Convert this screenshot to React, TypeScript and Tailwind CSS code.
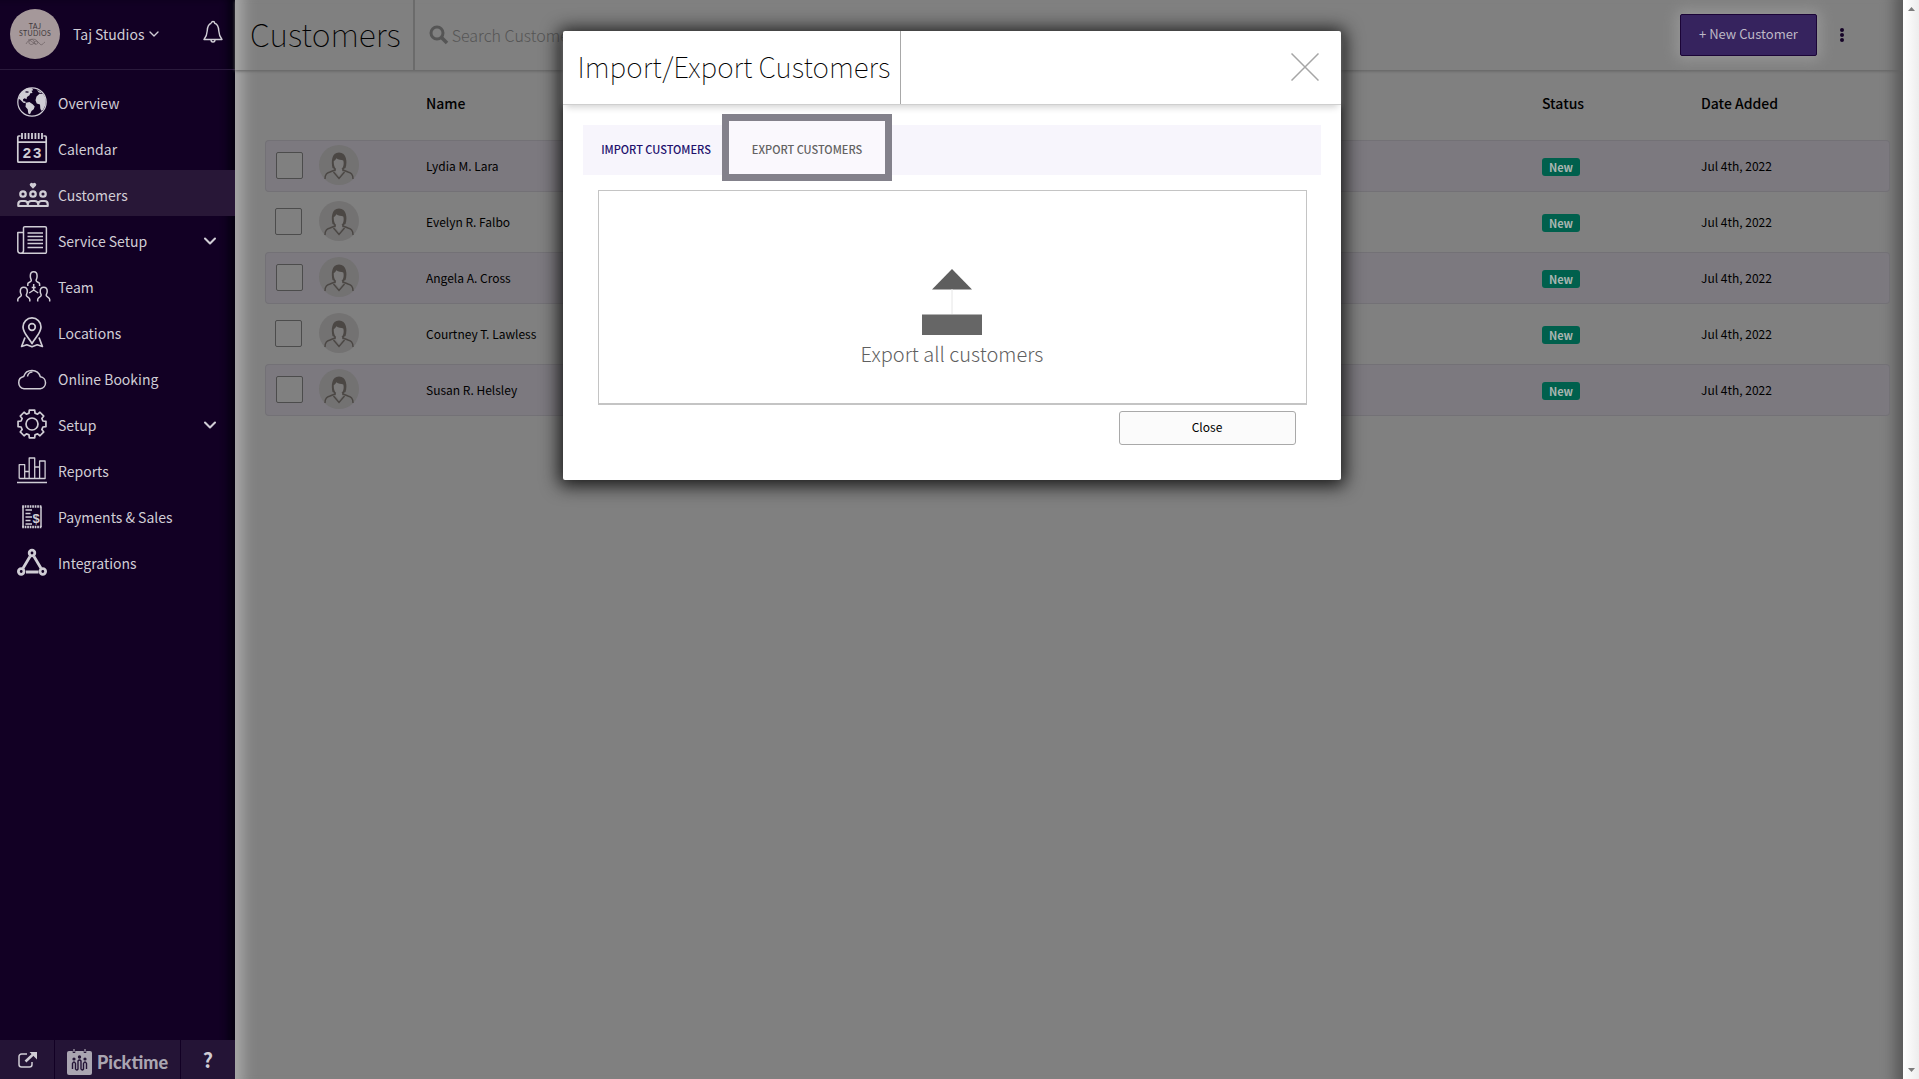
import React from 'react'
import { ChevronDown } from 'lucide-react'

interface NavItem {
  label: string
  icon: React.ReactNode
  active?: boolean
  expandable?: boolean
}

const customers = [
  { name: 'Lydia M. Lara', status: 'New', added: 'Jul 4th, 2022' },
  { name: 'Evelyn R. Falbo', status: 'New', added: 'Jul 4th, 2022' },
  { name: 'Angela A. Cross', status: 'New', added: 'Jul 4th, 2022' },
  { name: 'Courtney T. Lawless', status: 'New', added: 'Jul 4th, 2022' },
  { name: 'Susan R. Helsley', status: 'New', added: 'Jul 4th, 2022' }
]

// eight-toothed outline, centred on 15,17
const gearPoints = Array.from({ length: 8 }, (_, i) => {
  const base = (i * Math.PI) / 4
  return [
    [11.3, -0.27],
    [14.2, -0.19],
    [14.2, 0.19],
    [11.3, 0.27]
  ]
    .map(([r, a]) => `${(15 + r * Math.sin(base + a)).toFixed(2)},${(17 - r * Math.cos(base + a)).toFixed(2)}`)
    .join(' ')
}).join(' ')

function NavIcon({ children }: { children: React.ReactNode }) {
  return (
    <svg
      viewBox="0 -1 34 34"
      className="h-[34px] w-[34px] shrink-0 overflow-visible"
      fill="none"
      stroke="currentColor"
      strokeWidth="1.5"
      strokeLinejoin="round"
      aria-hidden="true"
    >
      {children}
    </svg>
  )
}

const navItems: NavItem[] = [
  {
    label: 'Overview',
    icon: (
      <NavIcon>
        <circle cx="15" cy="17" r="14.2" strokeWidth="1.2" />
        <g fill="currentColor" stroke="none">
          <path d="M3 9.500C5 6.500 8 4 11.500 3l3.500.2 1.200 2-1.700.6 1 2.200-2.200.3-.8 1.900-2.500 1.700-.5 2.300-1.800-1-1.700 1 .3 2 2 .3.500 1.800-2.500-.5-3-3.100-1.600-1z" />
          <path d="M9 17.800l3.400-.8 3.300 2.200 2 2.200-1 2.800-2.200 1.700-1.500 3.300-1.700-.7-.6-4.200-2.200-2.500z" />
          <path d="M19.500 11.500l3-2.800 3.500.4 2 3 .8 4-.3 4-2.400 4.700-1.800 1-1-2.400-.3-4-3.300-.9-1.200-3.200z" />
          <path d="M20 5l3.500 1.700 1.500 1.500-3.200-.6z" />
        </g>
        <path d="M8.500 6.800l3 .4" stroke="#120024" strokeWidth="1.200" />
      </NavIcon>
    )
  },
  {
    label: 'Calendar',
    icon: (
      <NavIcon>
        <path d="M3.500 5H1.800a1 1 0 0 0-1 1v24.200a1 1 0 0 0 1 1h26.400a1 1 0 0 0 1-1V6a1 1 0 0 0-1-1h-1.700M1 11.200h28" strokeWidth="1.700" />
        <path d="M5 2v6M8.300 2v6M11.600 2v6M15 2v6M18.400 2v6M21.700 2v6M25 2v6" strokeWidth="1.800" />
        <text x="5.800 16" y="27" fontSize="15" fontWeight="700" fontFamily="Liberation Sans, sans-serif" fill="currentColor" stroke="none">
          23
        </text>
      </NavIcon>
    )
  },
  {
    label: 'Customers',
    active: true,
    icon: (
      <NavIcon>
        <path d="M16 11.800l-2.900-3a1.800 1.800 0 0 1 2.900-2.200 1.800 1.800 0 0 1 2.900 2.200z" fill="currentColor" stroke="none" />
        <g strokeWidth="2.300">
          <circle cx="6" cy="17" r="2.700" />
          <circle cx="16" cy="17" r="2.700" />
          <circle cx="26" cy="17" r="2.700" />
        </g>
        <path d="M1.300 29v-2c0-2 1.500-3 3.200-3h3c1.700 0 3 1 3.300 2.700.3-1.700 1.700-2.700 3.400-2.700h3.600c1.700 0 3.100 1 3.400 2.700.3-1.700 1.600-2.700 3.300-2.700h3c1.700 0 3.200 1 3.200 3v2zM10.800 26v3M21.200 26v3" strokeWidth="2.200" />
      </NavIcon>
    )
  },
  {
    label: 'Service Setup',
    expandable: true,
    icon: (
      <NavIcon>
        <path d="M6.500 28V5a1.300 1.300 0 0 1 1.300-1.300h20.300A1.300 1.300 0 0 1 29.400 5v24a1.300 1.300 0 0 1-1.300 1.300H3.500a2.700 2.700 0 0 1-2.700-2.700V9.500H6.500M6.500 27.600a2.700 2.700 0 0 1-2.700 2.700" />
        <path d="M10.500 10h15.500M10.500 13.500h15.500M10.500 17h15.500M10.500 20.500h15.500M10.500 24.500h15.500" />
      </NavIcon>
    )
  },
  {
    label: 'Team',
    icon: (
      <NavIcon>
        <path d="M10.800 17v-2.200c0-1.600 3.500-1.500 3.500-3.300 0-1-1-1.800-1-4.500 0-2.800 1.400-4.200 3.400-4.200s3.400 1.400 3.400 4.200c0 2.700-1 3.500-1 4.500 0 1.800 3.500 1.700 3.500 3.300V17" />
        <path d="M.8 32.500v-2c0-2.300 3.500-2.400 3.500-4.300 0-1-1-1.800-1-4 0-2.700 1.500-4 3.500-4s3.500 1.300 3.500 4c0 2.200-1 3-1 4 0 1.900 3.500 2 3.500 4.300v2M20.700 32.500v-2c0-2.300 3.500-2.400 3.500-4.300 0-1-1-1.800-1-4 0-2.700 1.500-4 3.500-4s3.500 1.300 3.500 4c0 2.200-1 3-1 4 0 1.900 3.500 2 3.500 4.300v2" />
        <path d="M16.700 15v6l-4.500 3M16.700 21l4.500 3M14.700 18.500h4" />
      </NavIcon>
    )
  },
  {
    label: 'Locations',
    icon: (
      <NavIcon>
        <path d="M15 28.500c-2.500-5-9-10.500-9-16.600a9 9 0 0 1 18 0c0 6.100-6.500 11.600-9 16.600z" strokeWidth="1.700" />
        <circle cx="15" cy="12" r="3.300" strokeWidth="1.700" />
        <path d="M8 22.500L4.600 31.500l5.200-1.700 5.200 2 5.200-2 5.200 1.700L22 22.500" strokeWidth="1.700" />
      </NavIcon>
    )
  },
  {
    label: 'Online Booking',
    icon: (
      <NavIcon>
        <path d="M7 27.700a6.200 6.200 0 0 1-.3-12.200 8.700 8.700 0 0 1 16.600.3A6 6 0 0 1 23.300 27.700z" />
        <path d="M10.500 15.500a5 5 0 0 1 5-4.500" />
      </NavIcon>
    )
  },
  {
    label: 'Setup',
    expandable: true,
    icon: (
      <NavIcon>
        <polygon points={gearPoints} strokeWidth="1.700" />
        <circle cx="15" cy="17" r="6" strokeWidth="1.700" />
      </NavIcon>
    )
  },
  {
    label: 'Reports',
    icon: (
      <NavIcon>
        <path d="M2.200 25.500V11.700h5.500v13.800M12.200 25.500V5h5.500v20.500M22.600 25.500V8h5.500v17.500zM7.700 18.500h4.500M17.700 14h4.900M2.200 25.500h26M7.700 25.500v-7M0 29.500h30" strokeWidth="1.300" />
      </NavIcon>
    )
  },
  {
    label: 'Payments & Sales',
    icon: (
      <NavIcon>
        <path d="M6 7.500v20.500M24 7.500v20.500" strokeWidth="1.500" />
        <path d="M5.200 7.500h19.600M5.200 28h19.600" strokeWidth="2.500" strokeDasharray="1.700 .8" />
        <path d="M8.500 11h6.500M8.500 14.500h5M8.500 18h6.500M8.500 21.500h5M8.500 25h6.500" />
        <text x="19" y="24" textAnchor="middle" fontSize="13" fontWeight="700" fontFamily="Liberation Sans, sans-serif" fill="currentColor" stroke="none">
          $
        </text>
      </NavIcon>
    )
  },
  {
    label: 'Integrations',
    icon: (
      <NavIcon>
        <g strokeWidth="2.800">
          <circle cx="15" cy="8" r="2.800" />
          <circle cx="4.200" cy="26.500" r="2.800" />
          <circle cx="25.800" cy="26.500" r="2.800" />
          <path d="M13 11.500L6 23.200M17 11.500l7 11.700M9 27h12.500" />
        </g>
      </NavIcon>
    )
  }
]

function Sidebar() {
  return (
    <aside className="flex w-[235px] shrink-0 flex-col bg-[#120024] text-[#d0cdd5] shadow-[inset_-10px_0_8px_-4px_#04000f]">
      <div className="flex h-[70px] items-center border-b border-[#2a1a3c] pr-3 pb-px pl-[10px]">
        <div className="flex h-[50px] w-[50px] shrink-0 flex-col items-center justify-center rounded-full bg-[#a5989a] font-['Lato',sans-serif] text-[7px] leading-[7px] tracking-wider text-[#40383c]">
          <span>TAJ</span>
          <span>STUDIOS</span>
          <svg viewBox="0 0 20 9" className="h-[9px] w-5" fill="none" stroke="#6a5e62" strokeWidth=".7" aria-hidden="true">
            <path d="M1 7c3-5 6-6 8-3s-4 5-5 2 4-5 7-3 2 5-1 4 1-5 4-1 4 0 6-1M3 3c2-1 4 3 8 4" />
          </svg>
        </div>
        <button type="button" className="ml-[13px] flex items-center gap-0.5 text-[14px] leading-5">
          Taj Studios
          <ChevronDown className="h-4 w-4" />
        </button>
        <button type="button" aria-label="Notifications" className="ml-auto pb-1">
          <svg viewBox="0 0 20 24" className="h-6 w-5" fill="none" stroke="currentColor" strokeWidth="1.400" strokeLinejoin="round">
            <path d="M8.300 3.200a1.700 1.700 0 0 1 3.400 0C15 4 15.600 7 15.800 11c.2 4.500 1.200 6 3.200 8.500H1c2-2.500 3-4 3.200-8.500C4.400 7 5 4 8.300 3.200M8 19.800a2 2.200 0 0 0 4 0" />
          </svg>
        </button>
      </div>

      <nav className="flex flex-col pt-2">
        {navItems.map(item => (
          <a
            key={item.label}
            href="#"
            className={`flex h-[46px] items-center pr-[15px] pl-[17px] text-[14px] leading-5 ${
              item.active ? 'bg-[#281737]' : ''
            }`}
          >
            {item.icon}
            <span className="ml-[7px] pt-1">{item.label}</span>
            {item.expandable && (
              <span className="ml-auto pt-1">
                <ChevronDown className="h-5 w-5" strokeWidth={2.5} />
              </span>
            )}
          </a>
        ))}
      </nav>

      <div className="mt-auto flex h-[39px] bg-[#241436]">
        <a href="#" aria-label="Open booking page" className="flex w-[55px] items-center justify-center border-r border-[#120024]">
          <svg viewBox="0 0 20 18" className="h-[18px] w-5" fill="none" stroke="currentColor" strokeWidth="2">
            <path d="M10 3H4.500A2.500 2.500 0 0 0 2 5.500v8A2.500 2.500 0 0 0 4.500 16h8a2.500 2.500 0 0 0 2.500-2.500V11" strokeWidth="1.500" />
            <path d="M8.500 10.500L16 3.500" strokeWidth="2.500" />
            <path d="M12.500 1H20v7.500z" fill="currentColor" stroke="none" />
          </svg>
        </a>
        <a href="#" className="flex flex-1 items-center justify-center gap-[5px] border-r border-[#120024] pt-1 text-[#aaa5b1]">
          <svg viewBox="0 0 25 26" className="h-[26px] w-[25px]" aria-hidden="true">
            <path d="M2 2h21a2 2 0 0 1 2 2v20a2 2 0 0 1-2 2H2a2 2 0 0 1-2-2V4a2 2 0 0 1 2-2z" fill="currentColor" />
            <path d="M7 0v4M18 0v4" stroke="#241436" strokeWidth="2.500" />
            <path d="M7 0v3M18 0v3" stroke="currentColor" strokeWidth="1.200" />
            <g fill="#241436">
              <circle cx="7" cy="10" r="1.600" />
              <circle cx="12.500" cy="8" r="1.700" />
              <circle cx="18" cy="10" r="1.600" />
            </g>
            <path d="M5.500 20v-5.500q1.500-3 3 0V20q1.200 2 2.500 0v-8q1.500-2 3 0v8q1.200 2 2.500 0v-5.500q1.500-3 3 0V20" fill="none" stroke="#241436" strokeWidth="1.400" />
          </svg>
          <span className="font-['Lato',sans-serif] text-[18px] leading-6 font-black">Picktime</span>
        </a>
        <a href="#" aria-label="Help" className="flex w-[54px] items-center justify-center text-[20px] leading-6 font-bold">
          ?
        </a>
      </div>
    </aside>
  )
}

function Avatar() {
  return (
    <svg viewBox="0 0 40 40" className="block h-10 w-10" aria-hidden="true">
      <circle cx="20" cy="20" r="20" fill="#737272" />
      <path d="M6 34c0-5 2-6 5-7l5-2M34 34c0-5-2-6-5-7l-5-2M14.500 27l5.500 6.500 5.500-6.500M16 22v4M24 22v4" fill="none" stroke="#4b4744" strokeWidth="1.400" />
      <path d="M13.500 23c-1.500-6-1-15.500 6.500-15.500S28.500 17 26.500 23l-3 1.500h-7z" fill="#4b4744" />
      <path d="M14.800 16c1.500-.5 2-1.500 2.500-2.700 2 1.700 5 1.500 7 2.200 1.200 4-.3 9.500-4.300 9.500s-5.500-4.500-5.200-9z" fill="#7b7a7a" />
      <path d="M17 24v3l3 4 3-4v-3z" fill="#7b7a7a" />
    </svg>
  )
}

function CustomerTable() {
  return (
    <div className="pr-[13px] pl-[30px]">
      <table className="w-full table-fixed border-separate border-spacing-x-0 border-spacing-y-1 text-left text-black">
        <colgroup>
          <col className="w-[54px]" />
          <col className="w-[107px]" />
          <col />
          <col className="w-[159px]" />
          <col className="w-[189px]" />
        </colgroup>
        <thead>
          <tr className="h-[62px] text-[14px] leading-5">
            <th colSpan={2} />
            <th className="pb-1 font-medium">Name</th>
            <th className="pb-1 font-medium">Status</th>
            <th className="pb-1 font-medium">Date Added</th>
          </tr>
        </thead>
        <tbody>
          {customers.map((c, i) => {
            const cell = i % 2 === 0 ? 'border-y border-[#737176] bg-[#7c797f]' : ''
            return (
              <tr key={c.name} className="h-[52px] text-[12px] leading-5">
                <td className={`${cell} ${i % 2 === 0 ? 'rounded-l-sm border-l' : ''} p-0 pb-0.5 pl-[10px]`}>
                  <input
                    type="checkbox"
                    aria-label={`Select ${c.name}`}
                    className="block h-[27px] w-[27px] appearance-none rounded-xs border border-[#4c4c4c] bg-[#808080]"
                  />
                </td>
                <td className={`${cell} p-0 pb-0.5`}>
                  <Avatar />
                </td>
                <td className={`${cell} p-0`}>{c.name}</td>
                <td className={`${cell} p-0`}>
                  <span className="mt-0.5 inline-block h-[18px] rounded-[3px] bg-[#00604d] px-[7px] text-[11px] leading-[18px] font-bold text-[#a9b5b1]">
                    {c.status}
                  </span>
                </td>
                <td className={`${cell} ${i % 2 === 0 ? 'rounded-r-sm border-r' : ''} p-0`}>{c.added}</td>
              </tr>
            )
          })}
        </tbody>
      </table>
    </div>
  )
}

function ImportExportDialog() {
  return (
    <div
      role="dialog"
      aria-labelledby="dialog-title"
      className="absolute top-[31px] left-1/2 w-[778px] -translate-x-[397px] rounded-xs bg-white pb-[35px] shadow-[0_2px_18px_4px_#181818]"
    >
      <header className="flex h-[74px] items-stretch border-b border-[#cfcfcf] shadow-[0_5px_7px_-3px_#d0d0d0]">
        <h2 id="dialog-title" className="flex items-center border-r border-[#a8a8a8] pr-[10px] pb-1 pl-[15px] text-[28px] leading-9 font-thin text-black">
          Import/Export Customers
        </h2>
        <button type="button" aria-label="Close dialog" className="mr-[22px] ml-auto pb-0.5">
          <svg viewBox="0 0 28 28" className="h-7 w-7" stroke="#a6a6a6" strokeWidth="1.500">
            <path d="M.5.5l27 27M27.500.5l-27 27" />
          </svg>
        </button>
      </header>

      <div className="mx-5 mt-5 flex h-[50px] items-center bg-[#f7f5fc] pb-0.5 text-[11px] leading-4 font-medium">
        <button type="button" className="w-[147px] text-[#22106c]">
          IMPORT CUSTOMERS
        </button>
        <div className="relative flex w-[155px] justify-center">
          <span className="absolute -top-[27px] -right-[7px] -left-2 h-[67px] border-[7px] border-[#83818b] bg-[#faf8fd]" />
          <button type="button" className="relative text-[#626262]">
            EXPORT CUSTOMERS
          </button>
        </div>
      </div>

      <button
        type="button"
        className="mt-[15px] ml-[35px] flex h-[215px] w-[709px] flex-col items-center border border-b-2 border-[#c4c4c4] pt-[78px] text-[20px] leading-7 font-light text-[#5f5f5f]"
      >
        <svg viewBox="0 0 60 66" className="h-[66px] w-[60px]" aria-hidden="true">
          <path d="M30 0l20 20.500H10z" fill="#5e5e5e" />
          <path d="M30 20v25" stroke="#e6e6e6" />
          <path d="M0 45.500h60V66H0z" fill="#666" />
        </svg>
        <span className="mt-[5px]">Export all customers</span>
      </button>

      <div className="mt-[6px] mr-[45px] flex justify-end">
        <button type="button" className="h-[34px] w-[177px] rounded-[3px] border border-[#a9a9a9] bg-[#fbfbfb] pb-0.5 text-[12px] leading-5 text-black">
          Close
        </button>
      </div>
    </div>
  )
}

export default function App() {
  return (
    <div className="relative flex min-h-screen bg-[#808080] font-['Noto_Sans_CJK_SC',sans-serif]">
      <Sidebar />

      <main className="min-w-0 flex-1 shadow-[inset_20px_0_14px_-12px_#a8a8a8,inset_-20px_0_14px_-12px_#585858]">
        <header className="flex h-[70px] items-stretch shadow-[0_1px_3px_#606060]">
          <h1 className="flex items-center border-r-2 border-[#6b6b6b] pr-3 pb-1 pl-[15px] text-[32px] leading-10 font-thin text-black">
            Customers
          </h1>
          <label className="flex flex-1 items-center pl-[14px]">
            <svg viewBox="0 0 20 20" className="h-5 w-5" fill="none" stroke="#555" aria-hidden="true">
              <circle cx="8" cy="8" r="6" strokeWidth="3" />
              <path d="M12.500 12.500l5.500 5.500" strokeWidth="3.500" />
            </svg>
            <input
              type="search"
              aria-label="Search Customers"
              placeholder="Search Customers"
              className="ml-[3px] w-80 bg-transparent text-[16px] leading-6 font-light placeholder:text-[#555]"
            />
          </label>
          <div className="flex items-center pr-[59px]">
            <button
              type="button"
              className="h-[42px] w-[137px] rounded-xs border border-[#1b0437] bg-[#36235e] pb-0.5 text-[13px] leading-5 text-[#bdb8c6] shadow-[0_0_14px_4px_#969696]"
            >
              + New Customer
            </button>
            <button type="button" aria-label="More actions" className="ml-[23px]">
              <svg viewBox="0 0 4 14" className="h-[14px] w-1" fill="#160428">
                <circle cx="2" cy="2" r="2" />
                <circle cx="2" cy="7" r="2" />
                <circle cx="2" cy="12" r="2" />
              </svg>
            </button>
          </div>
        </header>
        <CustomerTable />
      </main>

      <div className="flex w-4 shrink-0 flex-col items-center justify-between bg-linear-to-r from-white to-[#ededed] py-[7px]" aria-hidden="true">
        <svg viewBox="0 0 7 4" className="h-1 w-[7px]" fill="#7d7d7d">
          <path d="M0 4l3.500-4L7 4z" />
        </svg>
        <svg viewBox="0 0 7 4" className="h-1 w-[7px]" fill="#7d7d7d">
          <path d="M0 0l3.500 4L7 0z" />
        </svg>
      </div>

      <ImportExportDialog />
    </div>
  )
}
